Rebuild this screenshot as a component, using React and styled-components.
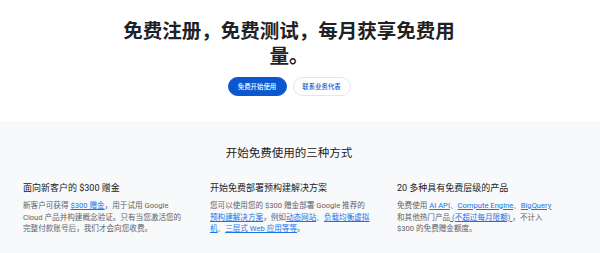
import React from 'react';
import styled, { createGlobalStyle } from 'styled-components';

const GlobalStyle = createGlobalStyle`
  html, body {
    margin: 0;
    padding: 0;
    background: #fff;
    font-family: Roboto, "Noto Sans CJK SC", sans-serif;
    color: #202124;
  }
`;

const Hero = styled.section`
  padding: 19px 22px 25px 0;
  display: flex;
  flex-direction: column;
  align-items: center;
`;

const Title = styled.h1`
  margin: 0;
  width: 345px;
  font-size: 19.5px;
  line-height: 25px;
  font-weight: 700;
  text-align: center;
  color: #202124;
`;

const Actions = styled.div`
  display: flex;
  gap: 6px;
  margin-top: 8px;
`;

const Button = styled.a`
  display: flex;
  align-items: center;
  justify-content: center;
  width: ${(p) => (p.primary ? '59px' : '58px')};
  height: 19px;
  border-radius: 10px;
  font-size: 6.4px;
  font-weight: 500;
  text-decoration: none;
  box-sizing: border-box;
  background: ${(p) => (p.primary ? '#0b57d0' : '#fff')};
  color: ${(p) => (p.primary ? '#fff' : '#0b57d0')};
  border: 1px solid ${(p) => (p.primary ? '#0b57d0' : '#e3e5e8')};
`;

const Ways = styled.section`
  background: #f8f9fa;
  padding: 24px 0 18px;
  height: 132px;
  box-sizing: border-box;
`;

const WaysTitle = styled.h2`
  margin: 0 22px 0 0;
  text-align: center;
  font-size: 11.5px;
  line-height: 16px;
  font-weight: 400;
  color: #202124;
`;

const Cards = styled.div`
  display: grid;
  grid-template-columns: repeat(3, 160px);
  column-gap: 27px;
  margin: 21px 0 0 23px;
`;

const Card = styled.div`
  display: flex;
  flex-direction: column;
  gap: 6px;
`;

const CardTitle = styled.h3`
  margin: 0;
  font-size: 9px;
  line-height: 12px;
  font-weight: 400;
  color: #202124;
  white-space: nowrap;
`;

const CardText = styled.p`
  margin: 0;
  font-size: 7.6px;
  line-height: 11.5px;
  color: #5f6368;
`;

const Link = styled.a`
  color: #1a73e8;
  text-decoration: underline;
  text-underline-offset: 1px;
`;

export default function App() {
  return (
    <>
      <GlobalStyle />
      <Hero>
        <Title>免费注册，免费测试，每月获享免费用量。</Title>
        <Actions>
          <Button primary href="#">免费开始使用</Button>
          <Button href="#">联系业务代表</Button>
        </Actions>
      </Hero>
      <Ways>
        <WaysTitle>开始免费使用的三种方式</WaysTitle>
        <Cards>
          <Card>
            <CardTitle>面向新客户的 $300 赠金</CardTitle>
            <CardText>
              新客户可获得 <Link href="#">$300 赠金</Link>，用于试用 Google
              Cloud 产品并构建概念验证。只有当您激活您的完整付款账号后，我们才会向您收费。
            </CardText>
          </Card>
          <Card>
            <CardTitle>开始免费部署预构建解决方案</CardTitle>
            <CardText>
              您可以使用您的 $300 赠金部署 Google 推荐的
              <Link href="#">预构建解决方案</Link>，例如<Link href="#">动态网站</Link>、
              <Link href="#">负载均衡虚拟机</Link>、<Link href="#">三层式 Web 应用等等</Link>。
            </CardText>
          </Card>
          <Card>
            <CardTitle>20 多种具有免费层级的产品</CardTitle>
            <CardText>
              免费使用 <Link href="#">AI API</Link>、<Link href="#">Compute Engine</Link>、
              <Link href="#">BigQuery</Link> 和其他热门产品<Link href="#"> (不超过每月限额) </Link>，不计入
              $300 的免费赠金额度。
            </CardText>
          </Card>
        </Cards>
      </Ways>
    </>
  );
}
